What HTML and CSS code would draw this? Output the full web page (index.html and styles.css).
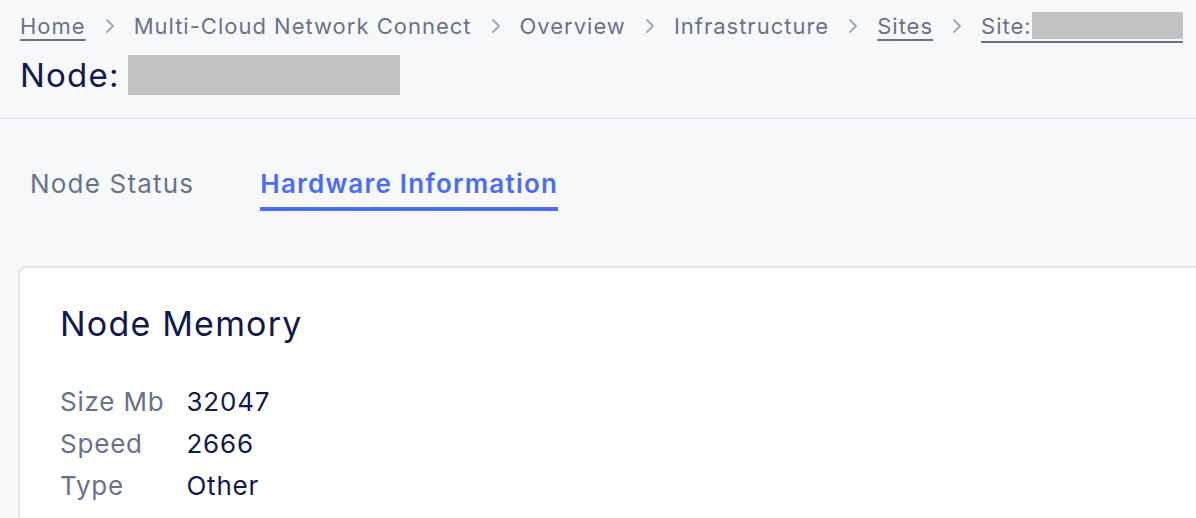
FILE: index.html
```html
<!DOCTYPE html>
<html lang="en">
<head>
<meta charset="utf-8">
<title>Node</title>
<link rel="stylesheet" href="styles.css">
</head>
<body>
<header class="page-header">
  <nav class="crumbs">
    <a class="crumb link" href="#">Home</a>
    <span class="sep"><svg viewBox="0 0 10 16" width="10" height="16"><path d="M2 2l6 6-6 6" fill="none" stroke="currentColor" stroke-width="2" stroke-linecap="round" stroke-linejoin="round"/></svg></span>
    <span class="crumb">Multi-Cloud Network Connect</span>
    <span class="sep"><svg viewBox="0 0 10 16" width="10" height="16"><path d="M2 2l6 6-6 6" fill="none" stroke="currentColor" stroke-width="2" stroke-linecap="round" stroke-linejoin="round"/></svg></span>
    <span class="crumb">Overview</span>
    <span class="sep"><svg viewBox="0 0 10 16" width="10" height="16"><path d="M2 2l6 6-6 6" fill="none" stroke="currentColor" stroke-width="2" stroke-linecap="round" stroke-linejoin="round"/></svg></span>
    <span class="crumb">Infrastructure</span>
    <span class="sep"><svg viewBox="0 0 10 16" width="10" height="16"><path d="M2 2l6 6-6 6" fill="none" stroke="currentColor" stroke-width="2" stroke-linecap="round" stroke-linejoin="round"/></svg></span>
    <a class="crumb link" href="#">Sites</a>
    <span class="sep"><svg viewBox="0 0 10 16" width="10" height="16"><path d="M2 2l6 6-6 6" fill="none" stroke="currentColor" stroke-width="2" stroke-linecap="round" stroke-linejoin="round"/></svg></span>
    <a class="crumb site" href="#">Site:<span class="redact-inline"></span></a>
  </nav>
  <h1 class="title">Node: <span class="redact"></span></h1>
</header>
<div class="tabs">
  <span class="tab">Node Status</span>
  <span class="tab active">Hardware Information</span>
</div>
<section class="card">
  <h2 class="card-title">Node Memory</h2>
  <dl class="props">
    <dt>Size Mb</dt><dd>32047</dd>
    <dt>Speed</dt><dd>2666</dd>
    <dt>Type</dt><dd>Other</dd>
  </dl>
</section>
</body>
</html>
```

FILE: styles.css
```css
* { box-sizing: border-box; }
html, body {
  margin: 0;
  padding: 0;
  background: #f7f8fa;
  font-family: Inter, "Noto Sans", sans-serif;
  letter-spacing: 0.8px;
  overflow: hidden;
}
body { width: 1196px; height: 518px; }

.page-header {
  padding: 10px 0 0 20px;
  height: 119px;
  border-bottom: 2px solid #e8eaf1;
}
.crumbs {
  display: flex;
  align-items: center;
  height: 32px;
  white-space: nowrap;
  font-size: 22px;
  line-height: 32px;
  letter-spacing: 1px;
  color: #68728c;
}
.crumb { color: #68728c; text-decoration: none; }
.crumb.link {
  text-decoration: underline;
  text-decoration-thickness: 2px;
  text-underline-offset: 5px;
}
.sep {
  display: inline-flex;
  color: #a2a9ba;
  margin: 0 19px 0 19px;
}
.site {
  display: inline-flex;
  align-items: flex-end;
  height: 32px;
  line-height: 30px;
  border-bottom: 2px solid #68728c;
  margin-top: 2px;
}
.redact-inline {
  display: inline-block;
  width: 151px;
  height: 27px;
  background: #c2c2c2;
  margin: 0 0 2px 0;
}
.title {
  margin: 9px 0 0;
  display: flex;
  align-items: center;
  font-size: 33px;
  font-weight: 400;
  letter-spacing: 1.2px;
  color: #101a4d;
  line-height: 48px;
}
.redact {
  display: inline-block;
  width: 272px;
  height: 40px;
  background: #c2c2c2;
  margin-left: 8px;
}

.tabs {
  display: flex;
  gap: 66px;
  padding: 45px 0 0 30px;
  height: 147px;
}
.tab {
  font-size: 26px;
  line-height: 40px;
  letter-spacing: 1.2px;
  color: #68728c;
  height: 47px;
}
.tab.active {
  color: #4a6cf6;
  font-weight: 600;
  letter-spacing: 1.2px;
  border-bottom: 4px solid #4a6cf6;
}

.card {
  margin-left: 18px;
  background: #fff;
  border: 2px solid #e5e7ef;
  border-right: none;
  border-radius: 8px 0 0 0;
  padding: 32px 0 0 40px;
  height: 260px;
}
.card-title {
  margin: 0;
  font-size: 34px;
  font-weight: 400;
  color: #101a4d;
  line-height: 48px;
  letter-spacing: 1.2px;
}
.props {
  margin: 33px 0 0;
  display: grid;
  grid-template-columns: max-content max-content;
  column-gap: 22px;
  font-size: 26px;
  line-height: 42px;
}
.props dt { color: #68728c; }
.props dd { margin: 0; color: #101a4d; }
```
